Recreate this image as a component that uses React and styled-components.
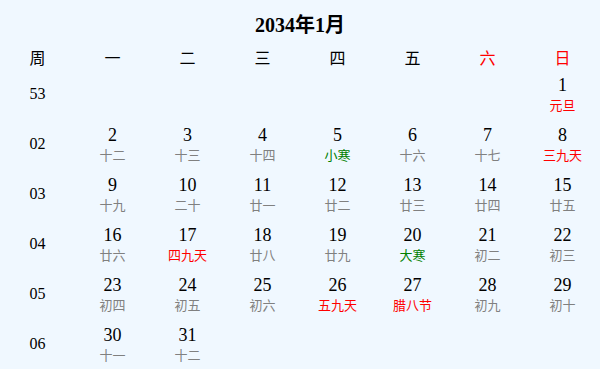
import React from 'react';
import styled, { createGlobalStyle } from 'styled-components';

const GlobalStyle = createGlobalStyle`
  html, body {
    margin: 0;
    padding: 0;
    background: #f0f8ff;
  }
  body {
    font-family: "Liberation Serif", "Noto Sans CJK SC", serif;
    color: #000;
  }
`;

const Calendar = styled.div`
  width: 600px;
  height: 369px;
  background: #f0f8ff;
`;

const Title = styled.div`
  height: 48px;
  line-height: 50px;
  text-align: center;
  font-size: 20px;
  font-weight: bold;
`;

const Grid = styled.div`
  display: grid;
  grid-template-columns: repeat(8, 75px);
  grid-template-rows: 21px repeat(6, 50px);
`;

const HeadCell = styled.div`
  text-align: center;
  font-size: 16px;
  line-height: 21px;
  color: ${p => (p.$weekend ? '#ff0000' : '#000')};
`;

const WeekCell = styled.div`
  display: flex;
  align-items: center;
  justify-content: center;
  font-size: 16px;
`;

const DayCell = styled.div`
  display: flex;
  flex-direction: column;
  align-items: center;
  padding-top: 6px;
`;

const DayNum = styled.div`
  font-size: 18px;
  line-height: 20px;
`;

const Lunar = styled.div`
  font-family: "Noto Sans CJK SC", sans-serif;
  font-size: 13px;
  line-height: 20px;
  color: ${p => (p.$kind === 'red' ? '#ff0000' : p.$kind === 'green' ? '#008000' : '#808080')};
`;

const heads = ['周', '一', '二', '三', '四', '五', '六', '日'];

const lunar = {
  1: ['元旦', 'red'], 2: ['十二'], 3: ['十三'], 4: ['十四'], 5: ['小寒', 'green'],
  6: ['十六'], 7: ['十七'], 8: ['三九天', 'red'], 9: ['十九'], 10: ['二十'],
  11: ['廿一'], 12: ['廿二'], 13: ['廿三'], 14: ['廿四'], 15: ['廿五'],
  16: ['廿六'], 17: ['四九天', 'red'], 18: ['廿八'], 19: ['廿九'], 20: ['大寒', 'green'],
  21: ['初二'], 22: ['初三'], 23: ['初四'], 24: ['初五'], 25: ['初六'],
  26: ['五九天', 'red'], 27: ['腊八节', 'red'], 28: ['初九'], 29: ['初十'],
  30: ['十一'], 31: ['十二'],
};

// Jan 1 2034 is a Sunday
const weeks = [
  ['53', [null, null, null, null, null, null, 1]],
  ['02', [2, 3, 4, 5, 6, 7, 8]],
  ['03', [9, 10, 11, 12, 13, 14, 15]],
  ['04', [16, 17, 18, 19, 20, 21, 22]],
  ['05', [23, 24, 25, 26, 27, 28, 29]],
  ['06', [30, 31, null, null, null, null, null]],
];

const App = () => (
  <Calendar>
    <GlobalStyle />
    <Title>2034年1月</Title>
    <Grid>
      {heads.map((h, i) => (
        <HeadCell key={h} $weekend={i >= 6}>{h}</HeadCell>
      ))}
      {weeks.map(([wk, days]) => (
        <React.Fragment key={wk}>
          <WeekCell>{wk}</WeekCell>
          {days.map((d, i) => (
            <DayCell key={i}>
              {d && (
                <>
                  <DayNum>{d}</DayNum>
                  <Lunar $kind={lunar[d][1]}>{lunar[d][0]}</Lunar>
                </>
              )}
            </DayCell>
          ))}
        </React.Fragment>
      ))}
    </Grid>
  </Calendar>
);

export default App;
